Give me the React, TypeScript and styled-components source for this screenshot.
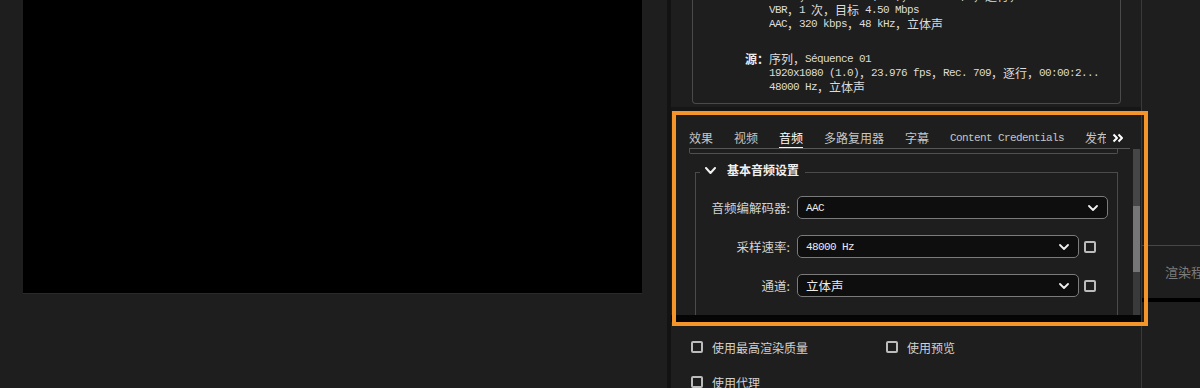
import React from "react";
import styled, { createGlobalStyle } from "styled-components";

const GlobalStyle = createGlobalStyle`
  html, body { margin: 0; padding: 0; background: #1e1e1e; }
  body { font-family: "Noto Sans CJK SC", "Noto Sans", sans-serif; overflow: hidden; }
  * { box-sizing: border-box; }
`;

const Page = styled.div`
  position: relative;
  display: flex;
  width: 1200px;
  height: 388px;
  overflow: hidden;
  background: #1e1e1e;
  color: #d6d6d6;
`;

const LeftPanel = styled.div`
  width: 667px;
  flex: none;
  padding-left: 23px;
`;

const Video = styled.div`
  width: 619px;
  height: 293px;
  background: #000;
  box-shadow: 0 1px 0 #2a2a2a;
`;

const Gutter = styled.div`
  width: 4px;
  flex: none;
  background: #131313;
`;

const MainPanel = styled.div`
  width: 471px;
  flex: none;
  display: flex;
  flex-direction: column;
  border-right: 1px solid #3a3a3a;
`;

const SummaryArea = styled.div`
  height: 107px;
  flex: none;
  overflow: hidden;
  padding-left: 21px;
`;

const SummaryBox = styled.div`
  width: 429px;
  margin-top: -11px;
  border: 1px solid #4a4a4a;
  border-top: none;
  border-radius: 0 0 4px 4px;
  padding-bottom: 9px;
  display: flex;
  flex-direction: column;
  gap: 21px;
`;

const Group = styled.div`
  display: flex;
`;

const GroupLabel = styled.div`
  width: 76px;
  flex: none;
  text-align: right;
  font-size: 12px;
  font-weight: 700;
  line-height: 14px;
  height: 14px;
  color: #ececec;
`;

const Lines = styled.div`
  display: flex;
  flex-direction: column;
`;

const MonoLine = styled.div`
  height: 14px;
  line-height: 14px;
  white-space: nowrap;
  font-family: "Liberation Mono", monospace;
  font-size: 11px;
  letter-spacing: -0.6px;
  color: #dcdcdc;
  overflow: hidden;
`;

const Wide = styled.span`
  display: inline-block;
  height: 14px;
  line-height: 14px;
  vertical-align: top;
  font-family: "Noto Sans CJK SC", sans-serif;
  font-size: 12px;
  letter-spacing: 0;
`;

const MonoText = styled.span`
  font-family: "Liberation Mono", monospace;
  font-size: 11px;
  letter-spacing: -0.6px;
`;

const CJK = /([\u3000-\u9fff\uff00-\uffef]+)/;

function Mixed({ text }: { text: string }) {
  return (
    <>
      {text.split(CJK).map((part, i) =>
        i % 2 === 1 ? <Wide key={i}>{part}</Wide> : <React.Fragment key={i}>{part}</React.Fragment>
      )}
    </>
  );
}

const HGutter = styled.div`
  height: 4px;
  flex: none;
  background: #161616;
`;

const TabPanel = styled.div`
  height: 211px;
  flex: none;
  display: flex;
  flex-direction: column;
`;

const TabBar = styled.div`
  height: 21px;
  flex: none;
  margin: 17px 11px 0 18px;
  display: flex;
  align-items: stretch;
  border-bottom: 1px solid #575757;
`;

const TabList = styled.div`
  flex: 1;
  min-width: 0;
  display: flex;
  gap: 21px;
  overflow: hidden;
`;

const Tab = styled.div<{ $active?: boolean }>`
  position: relative;
  flex: none;
  display: flex;
  align-items: center;
  font-size: 12px;
  line-height: 14px;
  white-space: nowrap;
  color: ${(p) => (p.$active ? "#ffffff" : "#c6c6c6")};
  &::after {
    content: "";
    display: ${(p) => (p.$active ? "block" : "none")};
    position: absolute;
    left: 0;
    right: 0;
    bottom: -1px;
    height: 2px;
    background: #f2f2f2;
  }
`;

const MoreButton = styled.div`
  flex: none;
  width: 12px;
  margin: 0 6px;
  display: flex;
  align-items: center;
  justify-content: center;
`;

const ScrollArea = styled.div`
  flex: 1;
  min-height: 0;
  display: flex;
  overflow: hidden;
`;

const ScrollContent = styled.div`
  flex: 1;
  min-width: 0;
  overflow: hidden;
`;

const PrevBox = styled.div`
  width: 429px;
  height: 5px;
  margin-left: 18px;
  border: 1px solid #505050;
  border-top: none;
  border-radius: 0 0 2px 2px;
`;

const Section = styled.fieldset`
  width: 423px;
  margin: 8px 0 0 24px;
  padding: 0 9px 20px 0;
  border: 1px solid #4b4b4b;
  min-width: 0;
`;

const Legend = styled.legend`
  margin-left: 4px;
  padding: 0 6px 4px 5px;
  display: flex;
  align-items: center;
  gap: 11px;
  font-size: 12px;
  font-weight: 700;
  line-height: 16px;
  color: #f0f0f0;
`;

const Rows = styled.div`
  margin-top: 14px;
  display: flex;
  flex-direction: column;
  gap: 16px;
`;

const Row = styled.div`
  height: 23px;
  display: flex;
  align-items: center;
`;

const RowLabel = styled.div`
  width: 94px;
  flex: none;
  text-align: right;
  font-size: 12.5px;
  color: #d2d2d2;
  white-space: nowrap;
`;

const Select = styled.div<{ $wide?: boolean }>`
  width: ${(p) => (p.$wide ? 311 : 282)}px;
  height: 23px;
  margin-left: 7px;
  flex: none;
  display: flex;
  align-items: center;
  justify-content: space-between;
  padding: 0 9px 0 8px;
  background: #0e0e0e;
  border: 1px solid #7b7b7b;
  border-radius: 5px;
  color: #ececec;
  font-size: 12.5px;
`;

const Check = styled.div`
  width: 12px;
  height: 12px;
  flex: none;
  border: 2px solid #bcbcbc;
  border-radius: 2px;
`;

const RowCheck = styled(Check)`
  margin-left: 5px;
`;

const Scrollbar = styled.div`
  width: 8px;
  flex: none;
  display: flex;
  flex-direction: column;
  padding-right: 1px;
`;

const TrackPart = styled.div<{ $h?: number; $c: string }>`
  flex: ${(p) => (p.$h ? "none" : "1")};
  height: ${(p) => (p.$h ? `${p.$h}px` : "auto")};
  background: ${(p) => p.$c};
`;

const BlackBar = styled.div`
  height: 7px;
  flex: none;
  background: #050505;
`;

const BottomOptions = styled.div`
  padding: 15px 0 0 20px;
  display: grid;
  grid-template-columns: 195px 195px;
  row-gap: 15px;
`;

const Option = styled.div`
  height: 20px;
  display: flex;
  align-items: center;
  gap: 9px;
  font-size: 12px;
  color: #d2d2d2;
  white-space: nowrap;
`;

const SidePanel = styled.div`
  flex: 1;
  display: flex;
  flex-direction: column;
  padding-top: 245px;
`;

const SideTab = styled.div`
  height: 53px;
  border-top: 1px solid #474747;
  padding: 0 0 2px 23px;
  display: flex;
  align-items: center;
  font-size: 13px;
  color: #7c7c7c;
  white-space: nowrap;
  overflow: hidden;
`;

const SideStrip = styled.div`
  height: 4px;
  background: #000;
`;

const Highlight = styled.div`
  position: absolute;
  left: 672px;
  top: 111px;
  width: 476px;
  height: 215px;
  border: 4px solid #f4952b;
  pointer-events: none;
`;

const ChevronDown = ({ w = 10, h = 6, sw = 1.8 }: { w?: number; h?: number; sw?: number }) => (
  <svg width={w} height={h} viewBox={`0 0 ${w} ${h}`} fill="none">
    <polyline
      points={`1,1 ${w / 2},${h - 1} ${w - 1},1`}
      stroke="#f0f0f0"
      strokeWidth={sw}
      strokeLinecap="round"
      strokeLinejoin="round"
    />
  </svg>
);

const DoubleChevron = () => (
  <svg width="12" height="10" viewBox="0 0 12 10" fill="none">
    <polyline points="1.5,1.5 5,5 1.5,8.5" stroke="#fff" strokeWidth="2" strokeLinejoin="round" />
    <polyline points="6.5,1.5 10,5 6.5,8.5" stroke="#fff" strokeWidth="2" strokeLinejoin="round" />
  </svg>
);

const tabs = ["效果", "视频", "音频", "多路复用器", "字幕", "Content Credentials", "发布"];

export default function App() {
  return (
    <>
      <GlobalStyle />
      <Page>
        <LeftPanel>
          <Video />
        </LeftPanel>
        <Gutter />
        <MainPanel>
          <SummaryArea>
            <SummaryBox>
              <Group>
                <GroupLabel />
                <Lines>
                  <MonoLine><Mixed text="H.264，1920x1080 (1.0)，23.976 fps，逐行，00:00:20:00" /></MonoLine>
                  <MonoLine><Mixed text="VBR，1 次，目标 4.50 Mbps" /></MonoLine>
                  <MonoLine><Mixed text="AAC，320 kbps，48 kHz，立体声" /></MonoLine>
                </Lines>
              </Group>
              <Group>
                <GroupLabel>源：</GroupLabel>
                <Lines>
                  <MonoLine><Mixed text="序列，Séquence 01" /></MonoLine>
                  <MonoLine><Mixed text="1920x1080 (1.0)，23.976 fps，Rec. 709，逐行，00:00:2..." /></MonoLine>
                  <MonoLine><Mixed text="48000 Hz，立体声" /></MonoLine>
                </Lines>
              </Group>
            </SummaryBox>
          </SummaryArea>
          <HGutter />
          <TabPanel>
            <TabBar>
              <TabList>
                {tabs.map((t) => (
                  <Tab key={t} $active={t === "音频"}>
                    {t === "Content Credentials" ? <MonoText>{t}</MonoText> : t}
                  </Tab>
                ))}
              </TabList>
              <MoreButton>
                <DoubleChevron />
              </MoreButton>
            </TabBar>
            <ScrollArea>
              <ScrollContent>
                <PrevBox />
                <Section>
                  <Legend>
                    <ChevronDown w={11} h={7} sw={2} />
                    基本音频设置
                  </Legend>
                  <Rows>
                    <Row>
                      <RowLabel>音频编解码器:</RowLabel>
                      <Select $wide>
                        <MonoText>AAC</MonoText>
                        <ChevronDown />
                      </Select>
                    </Row>
                    <Row>
                      <RowLabel>采样速率:</RowLabel>
                      <Select>
                        <MonoText>48000 Hz</MonoText>
                        <ChevronDown />
                      </Select>
                      <RowCheck />
                    </Row>
                    <Row>
                      <RowLabel>通道:</RowLabel>
                      <Select>
                        <span>立体声</span>
                        <ChevronDown />
                      </Select>
                      <RowCheck />
                    </Row>
                  </Rows>
                </Section>
              </ScrollContent>
              <Scrollbar>
                <TrackPart $h={57} $c="#464646" />
                <TrackPart $h={66} $c="#767676" />
                <TrackPart $c="#3a3a3a" />
              </Scrollbar>
            </ScrollArea>
            <BlackBar />
          </TabPanel>
          <BottomOptions>
            <Option><Check />使用最高渲染质量</Option>
            <Option><Check />使用预览</Option>
            <Option><Check />使用代理</Option>
          </BottomOptions>
        </MainPanel>
        <SidePanel>
          <SideTab>渲染程序</SideTab>
          <SideStrip />
        </SidePanel>
        <Highlight />
      </Page>
    </>
  );
}
